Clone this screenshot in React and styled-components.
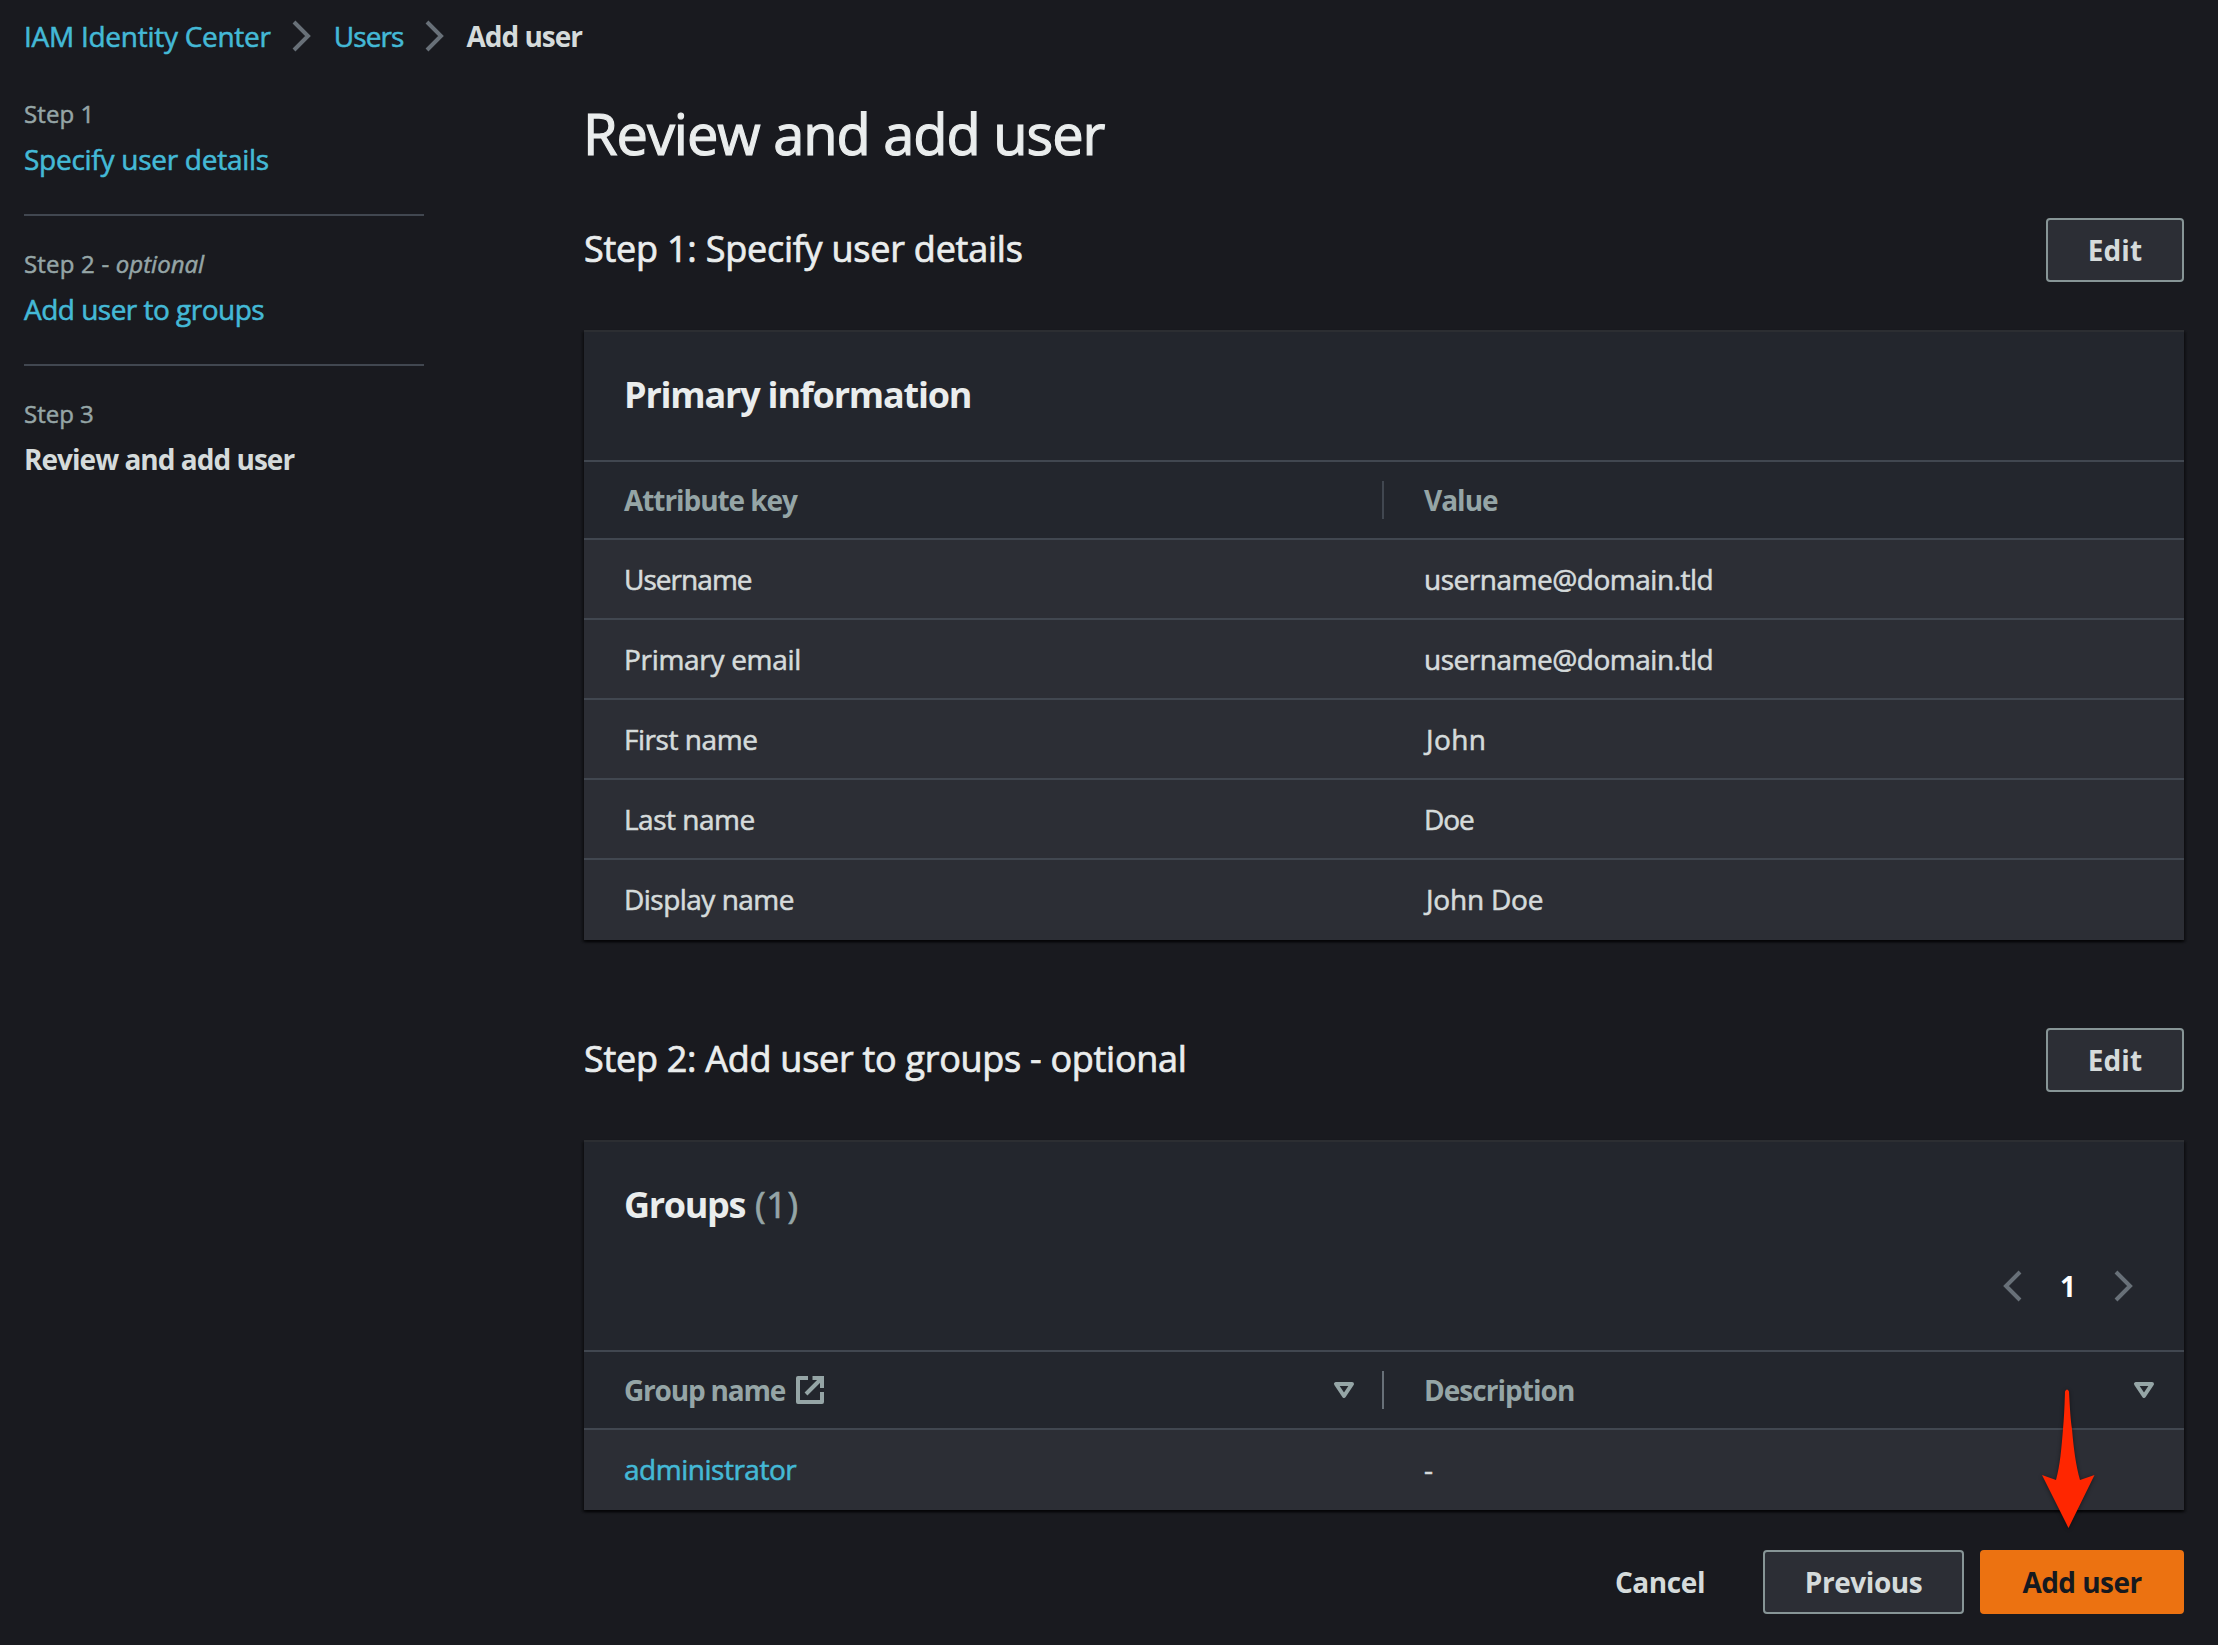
import React from "react";
import styled, { createGlobalStyle } from "styled-components";

const color = {
  page: "#191a1f",
  header: "#23262d",
  row: "#2c2e35",
  divider: "#414750",
  cardTop: "#2c2e32",
  text: "#d5dbdb",
  heading: "#eaeded",
  muted: "#95a5a6",
  icon: "#687078",
  link: "#44b9d6",
  accent: "#ec7211",
  buttonBorder: "#879596",
};

const GlobalStyle = createGlobalStyle`
  *, *::before, *::after { box-sizing: border-box; }
  body {
    margin: 0;
    background: ${color.page};
    color: ${color.text};
    font-family: "Open Sans", "Noto Sans", sans-serif;
    font-size: 28px;
    line-height: 44px;
    font-weight: 400;
  }
  h1, h2, h3, p { margin: 0; font-weight: inherit; }
`;

const Page = styled.div`
  width: 2218px;
  height: 1645px;
  overflow: hidden;
`;

const Text = styled.span`
  white-space: nowrap;
  letter-spacing: ${(p) => p.$track || 0}px;
  -webkit-text-stroke: 0.02em currentColor;
`;

const BoldText = styled(Text)`
  font-weight: 700;
  -webkit-text-stroke: 0;
`;

const Link = styled(Text)`
  color: ${color.link};
`;

const Breadcrumbs = styled.nav`
  display: flex;
  align-items: center;
  height: 72px;
  padding: 0 0 1px 24px;
`;

const CrumbIcon = styled.svg`
  width: 32px;
  height: 32px;
  margin: 1px 16px 0 15px;
  flex: none;
  fill: none;
  stroke: ${color.icon};
  stroke-width: 4;
`;

const Layout = styled.div`
  display: flex;
  align-items: flex-start;
`;

const Steps = styled.aside`
  width: 400px;
  margin: 26px 160px 0 24px;
  flex: none;
`;

const StepItem = styled.div`
  display: flex;
  flex-direction: column;
  align-items: flex-start;
  padding-bottom: 33px;
  & + & {
    padding-top: 32px;
    border-top: 2px solid ${color.divider};
  }
`;

const StepLabel = styled.div`
  margin-bottom: 8px;
  color: ${color.muted};
  font-size: 24px;
  line-height: 31px;
  white-space: pre;
`;

const Main = styled.main`
  width: 1600px;
  padding-top: 25px;
`;

const PageTitle = styled.h1`
  height: 72px;
  margin-bottom: 49px;
  margin-left: -1px;
  color: ${color.heading};
  font-size: 56px;
  line-height: 72px;
`;

const Section = styled.section`
  & + & { margin-top: 88px; }
`;

const SectionHead = styled.div`
  display: flex;
  align-items: center;
  justify-content: space-between;
  height: 64px;
  margin-bottom: 48px;
`;

const SectionTitle = styled.h2`
  margin-bottom: 3px;
  color: ${color.heading};
  font-size: 36px;
  line-height: 45px;
`;

const Button = styled.button`
  display: flex;
  align-items: center;
  justify-content: center;
  width: ${(p) => p.$width}px;
  height: 64px;
  padding: 0;
  border: 2px solid ${(p) => (p.$kind === "primary" ? color.accent : p.$kind === "plain" ? "transparent" : color.buttonBorder)};
  border-radius: 4px;
  background: ${(p) => (p.$kind === "primary" ? color.accent : p.$kind === "plain" ? "transparent" : color.row)};
  color: ${(p) => (p.$kind === "primary" ? "#16191f" : color.text)};
  font: 700 28px/60px "Open Sans", "Noto Sans", sans-serif;
`;

const Card = styled.div`
  border-top: 2px solid ${color.cardTop};
  background: ${color.header};
  box-shadow: 0 2px 2px rgba(0, 0, 0, 0.5), 2px 2px 2px rgba(0, 0, 0, 0.3), -2px 2px 2px rgba(0, 0, 0, 0.3);
`;

const CardHead = styled.header`
  height: ${(p) => p.$height}px;
  padding: 40px 44px 0 40px;
`;

const CardTitle = styled.h3`
  height: 45px;
  color: ${color.heading};
  font-size: 36px;
  line-height: 45px;
`;

const Count = styled(Text)`
  margin-left: 10px;
  color: ${color.muted};
`;

const Pager = styled.div`
  display: flex;
  align-items: center;
  justify-content: flex-end;
  height: 44px;
  margin-top: 37px;
`;

const PagerIcon = styled.svg`
  width: 32px;
  height: 32px;
  fill: none;
  stroke: ${color.icon};
  stroke-width: 4;
`;

const PageNumber = styled.span`
  width: 78px;
  padding: 0 2px 1px 0;
  color: #ffffff;
  font-weight: 700;
  text-align: center;
`;

const HeadRow = styled.div`
  display: grid;
  grid-template-columns: 1fr 1fr;
  height: 80px;
  border-top: 2px solid ${color.divider};
  border-bottom: 2px solid ${color.divider};
`;

const HeadCell = styled.div`
  display: flex;
  align-items: center;
  padding: 0 24px 0 40px;
  color: ${color.muted};
`;

const HeadLabel = styled(BoldText)``;

const Separator = styled.i`
  width: 2px;
  height: 38px;
  margin-left: ${(p) => (p.$afterIcon ? "22px" : "auto")};
  margin-right: -24px;
  background: ${(p) => (p.$strong ? color.icon : color.divider)};
`;

const SortIcon = styled.svg`
  width: 32px;
  height: 32px;
  margin-left: auto;
  fill: none;
  stroke: ${color.muted};
  stroke-width: 4;
  stroke-linejoin: round;
`;

const ExternalIcon = styled.svg`
  width: 32px;
  height: 32px;
  margin-left: 9px;
  fill: none;
  stroke: ${color.muted};
  stroke-width: 4;
  stroke-linejoin: round;
`;

const Row = styled.div`
  display: grid;
  grid-template-columns: 1fr 1fr;
  height: 80px;
  padding-top: 17px;
  border-bottom: 2px solid ${color.divider};
  background: ${color.row};
  &:last-child { border-bottom: 0; }
`;

const Cell = styled.div`
  padding-left: ${(p) => 40 + (p.$nudge || 0)}px;
`;

const Actions = styled.footer`
  display: flex;
  justify-content: flex-end;
  gap: 16px;
  margin-top: 40px;
`;

const Target = styled.div`
  position: relative;
`;

const Pointer = styled.svg`
  position: absolute;
  left: 60px;
  top: -164px;
  width: 60px;
  height: 150px;
  overflow: visible;
  pointer-events: none;
  filter: drop-shadow(0 1px 2px rgba(0, 0, 0, 0.45));
`;

const Chevron = ({ as: Icon, left }) => (
  <Icon viewBox="0 0 32 32">
    <path d={left ? "M22 2L8 16L22 30" : "M8 2L22 16L8 30"} />
  </Icon>
);

const Sort = () => (
  <SortIcon viewBox="0 0 32 32">
    <path d="M8 10H24L16 22Z" />
  </SortIcon>
);

const attributes = [
  { key: "Username", keyTrack: -0.96, value: "username@domain.tld", valueTrack: -0.48 },
  { key: "Primary email", keyTrack: -0.3, value: "username@domain.tld", valueTrack: -0.48 },
  { key: "First name", keyTrack: -0.45, value: "John", valueTrack: 0.4, nudge: 2 },
  { key: "Last name", keyTrack: -0.5, value: "Doe", valueTrack: -1.1 },
  { key: "Display name", keyTrack: -0.52, value: "John Doe", valueTrack: -0.2, nudge: 2 },
];

export default function App() {
  return (
    <Page>
      <GlobalStyle />
      <Breadcrumbs>
        <Link $track={-0.27}>IAM Identity Center</Link>
        <Chevron as={CrumbIcon} />
        <Link $track={-0.9}>Users</Link>
        <Chevron as={CrumbIcon} />
        <BoldText $track={-1.02}>Add user</BoldText>
      </Breadcrumbs>
      <Layout>
        <Steps>
          <StepItem>
            <StepLabel><Text $track={0.1}>Step 1</Text></StepLabel>
            <Link $track={-0.27}>Specify user details</Link>
          </StepItem>
          <StepItem>
            <StepLabel><Text $track={0.2}>Step 2 - </Text><em><Text>optional</Text></em></StepLabel>
            <Link $track={-0.52}>Add user to groups</Link>
          </StepItem>
          <StepItem>
            <StepLabel><Text $track={0}>Step 3</Text></StepLabel>
            <BoldText $track={-0.98}>Review and add user</BoldText>
          </StepItem>
        </Steps>
        <Main>
          <PageTitle><Text $track={-1.05}>Review and add user</Text></PageTitle>
          <Section>
            <SectionHead>
              <SectionTitle><Text $track={-0.24}>Step 1: Specify user details</Text></SectionTitle>
              <Button $width={138}><BoldText $track={0.1}>Edit</BoldText></Button>
            </SectionHead>
            <Card>
              <CardHead $height={128}>
                <CardTitle><BoldText $track={-1.2}>Primary information</BoldText></CardTitle>
              </CardHead>
              <HeadRow>
                <HeadCell>
                  <HeadLabel $track={-1.07}>Attribute key</HeadLabel>
                  <Separator />
                </HeadCell>
                <HeadCell><HeadLabel $track={-1}>Value</HeadLabel></HeadCell>
              </HeadRow>
              {attributes.map((a) => (
                <Row key={a.key}>
                  <Cell><Text $track={a.keyTrack}>{a.key}</Text></Cell>
                  <Cell $nudge={a.nudge}><Text $track={a.valueTrack}>{a.value}</Text></Cell>
                </Row>
              ))}
            </Card>
          </Section>
          <Section>
            <SectionHead>
              <SectionTitle><Text $track={-0.28}>Step 2: Add user to groups - optional</Text></SectionTitle>
              <Button $width={138}><BoldText $track={0.1}>Edit</BoldText></Button>
            </SectionHead>
            <Card>
              <CardHead $height={208}>
                <CardTitle><BoldText $track={-1.35}>Groups</BoldText><Count $track={0.7}>(1)</Count></CardTitle>
                <Pager>
                  <Chevron as={PagerIcon} left />
                  <PageNumber>1</PageNumber>
                  <Chevron as={PagerIcon} />
                </Pager>
              </CardHead>
              <HeadRow>
                <HeadCell>
                  <HeadLabel $track={-1.2}>Group name</HeadLabel>
                  <ExternalIcon viewBox="0 0 32 32">
                    <path d="M14 4H4V28H28V18" />
                    <path d="M18.5 4H28V14M12 20L28 4" strokeLinejoin="miter" />
                  </ExternalIcon>
                  <Sort />
                  <Separator $afterIcon $strong />
                </HeadCell>
                <HeadCell>
                  <HeadLabel $track={-0.97}>Description</HeadLabel>
                  <Sort />
                </HeadCell>
              </HeadRow>
              <Row>
                <Cell><Link $track={-0.48}>administrator</Link></Cell>
                <Cell><Text>-</Text></Cell>
              </Row>
            </Card>
          </Section>
          <Actions>
            <Button $kind="plain" $width={174}><BoldText $track={-0.42}>Cancel</BoldText></Button>
            <Button $width={201}><BoldText $track={-0.44}>Previous</BoldText></Button>
            <Target>
              <Button $kind="primary" $width={204}><BoldText $track={-0.56}>Add user</BoldText></Button>
              <Pointer viewBox="0 0 60 150">
                <path
                  d="M25 5.500Q27 1.500 29 5.500C30 24 30.500 33 32 43C33.500 62 36 80 40 94L54.500 89L28.500 142L2 89L16 94C20 80 21.500 62 23 43C24 33 24.500 22 25 5.500Z"
                  fill="#ff2600"
                />
              </Pointer>
            </Target>
          </Actions>
        </Main>
      </Layout>
    </Page>
  );
}
